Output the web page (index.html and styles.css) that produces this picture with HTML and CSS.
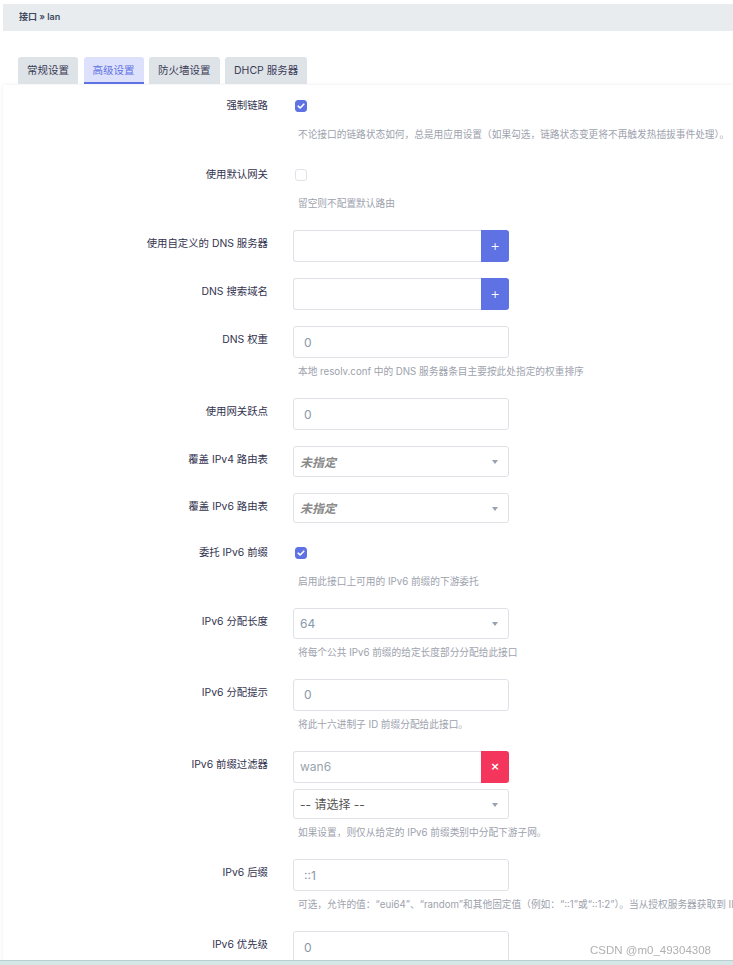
FILE: index.html
```html
<!DOCTYPE html>
<html lang="zh-CN">
<head>
<meta charset="utf-8">
<title>接口 » lan</title>
<link rel="stylesheet" href="styles.css">
</head>
<body>
<div class="page">
  <div class="crumb">接口 » lan</div>
  <ul class="tabs">
    <li class="tab">常规设置</li>
    <li class="tab active">高级设置</li>
    <li class="tab">防火墙设置</li>
    <li class="tab">DHCP 服务器</li>
  </ul>
  <div class="panel">
    <div class="row">
      <div class="label">强制链路</div>
      <div class="check-cell"><span class="cb checked"><svg viewBox="0 0 12 12" width="12" height="12"><path d="M3.2 6.2 L5.1 8 L8.8 4.2" fill="none" stroke="#fff" stroke-width="1.6" stroke-linecap="round" stroke-linejoin="round"/></svg></span></div>
      <div class="desc">不论接口的链路状态如何，总是用应用设置（如果勾选，链路状态变更将不再触发热插拔事件处理）。</div>
    </div>
    <div class="row">
      <div class="label">使用默认网关</div>
      <div class="check-cell"><span class="cb"></span></div>
      <div class="desc">留空则不配置默认路由</div>
    </div>
    <div class="row">
      <div class="label">使用自定义的 DNS 服务器</div>
      <div class="group"><div class="field grow"></div><span class="btn add">+</span></div>
    </div>
    <div class="row">
      <div class="label">DNS 搜索域名</div>
      <div class="group"><div class="field grow"></div><span class="btn add">+</span></div>
    </div>
    <div class="row">
      <div class="label">DNS 权重</div>
      <div class="field">0</div>
      <div class="desc">本地 resolv.conf 中的 DNS 服务器条目主要按此处指定的权重排序</div>
    </div>
    <div class="row">
      <div class="label">使用网关跃点</div>
      <div class="field">0</div>
    </div>
    <div class="row">
      <div class="label">覆盖 IPv4 路由表</div>
      <div class="field select unset">未指定</div>
    </div>
    <div class="row">
      <div class="label">覆盖 IPv6 路由表</div>
      <div class="field select unset">未指定</div>
    </div>
    <div class="row">
      <div class="label">委托 IPv6 前缀</div>
      <div class="check-cell"><span class="cb checked"><svg viewBox="0 0 12 12" width="12" height="12"><path d="M3.2 6.2 L5.1 8 L8.8 4.2" fill="none" stroke="#fff" stroke-width="1.6" stroke-linecap="round" stroke-linejoin="round"/></svg></span></div>
      <div class="desc">启用此接口上可用的 IPv6 前缀的下游委托</div>
    </div>
    <div class="row">
      <div class="label">IPv6 分配长度</div>
      <div class="field select">64</div>
      <div class="desc">将每个公共 IPv6 前缀的给定长度部分分配给此接口</div>
    </div>
    <div class="row">
      <div class="label">IPv6 分配提示</div>
      <div class="field">0</div>
      <div class="desc">将此十六进制子 ID 前缀分配给此接口。</div>
    </div>
    <div class="row">
      <div class="label">IPv6 前缀过滤器</div>
      <div class="stack">
        <div class="group"><div class="field grow light">wan6</div><span class="btn del">×</span></div>
        <div class="field select choose">-- 请选择 --</div>
      </div>
      <div class="desc">如果设置，则仅从给定的 IPv6 前缀类别中分配下游子网。</div>
    </div>
    <div class="row">
      <div class="label">IPv6 后缀</div>
      <div class="field">::1</div>
      <div class="desc">可选，允许的值：“eui64”、“random”和其他固定值（例如：“::1”或“::1:2”）。当从授权服务器获取到 IPv6 前缀（如 a:b:c:d::）时，使用后缀（如 '::1'）合成 IPv6 地址（'a:b:c:d::1'）。</div>
    </div>
    <div class="row">
      <div class="label">IPv6 优先级</div>
      <div class="field">0</div>
    </div>
  </div>
</div>
<div class="watermark">CSDN @m0_49304308</div>
<div class="bottom-band"></div>
</body>
</html>
```
FILE: styles.css
```css
html, body {
  margin: 0;
  padding: 0;
  background: #fff;
  overflow: hidden;
  height: 965px;
}
body {
  font-family: Inter, "Noto Sans CJK SC", "Noto Sans", sans-serif;
  color: #32325d;
}
.page {
  padding: 4px 0 0 3px;
}
.crumb {
  height: 27px;
  line-height: 26px;
  background: #e9ecef;
  padding-left: 16px;
  font-size: 9px;
  font-weight: 600;
  color: #3c4a60;
}
.tabs {
  list-style: none;
  margin: 26px 0 0 0;
  padding: 0 0 0 15px;
  display: flex;
  gap: 5.5px;
}
.tab {
  height: 27px;
  line-height: 28px;
  padding: 0 9px;
  background: #dee3e8;
  border-radius: 3px 3px 0 0;
  font-size: 10.5px;
  color: #3a3a55;
  box-sizing: border-box;
}
.tab.active {
  background: #dde1fb;
  color: #5e72e4;
  border-bottom: 2px solid #5e72e4;
}
.panel {
  margin-top: 1px;
  background: #fff;
  box-shadow: 0 0 4px rgba(0, 0, 0, 0.08);
  padding-top: 7px;
  min-height: 900px;
}
.row {
  display: grid;
  grid-template-columns: 265px 216px;
  column-gap: 25px;
  margin-bottom: 16px;
  align-items: start;
}
.label {
  text-align: right;
  font-size: 10.4px;
  line-height: 16px;
  padding-top: 6px;
  color: #33334f;
  white-space: nowrap;
}
.check-cell {
  height: 29px;
  padding-top: 8px;
  box-sizing: border-box;
}
.cb {
  display: block;
  width: 12px;
  height: 12px;
  margin-left: 2px;
  box-sizing: border-box;
  border: 1px solid #dfe3e8;
  border-radius: 3px;
  background: #fff;
}
.cb.checked {
  background: #5e72e4;
  border-color: #5e72e4;
}
.cb.checked svg {
  display: block;
  margin: -1px 0 0 -1px;
}
.desc {
  grid-column: 2;
  white-space: nowrap;
  font-size: 9.7px;
  line-height: 16px;
  margin: 6px 0 2px 5px;
  color: #9da2ad;
}
.field {
  height: 32px;
  box-sizing: border-box;
  border: 1px solid #dee2e6;
  border-radius: 3px;
  display: flex;
  align-items: center;
  padding: 0 10px;
  font-size: 12px;
  color: #8898aa;
  background: #fff;
}
.field.select {
  height: 30.5px;
  position: relative;
  padding-left: 6px;
}
.field.select::after {
  content: "";
  position: absolute;
  right: 10px;
  top: 13px;
  border-left: 3px solid transparent;
  border-right: 3px solid transparent;
  border-top: 4px solid #97a1b0;
}
.field.unset {
  font-style: italic;
  font-weight: 600;
  color: #8a8a8a;
}
.field.choose {
  color: #555;
}
.field.light {
  color: #9aa3ad;
  padding-left: 6px;
}
.group {
  display: flex;
}
.grow {
  flex: 1;
  border-radius: 3px 0 0 3px;
  border-right: none;
}
.btn {
  width: 28px;
  height: 32px;
  border-radius: 0 3px 3px 0;
  color: #fff;
  display: flex;
  align-items: center;
  justify-content: center;
  font-size: 11px;
  font-family: "DejaVu Sans", sans-serif;
}
.btn.add {
  background: #5e72e4;
}
.btn.del {
  background: #f5365c;
  font-size: 11px;
  font-weight: 700;
}
.stack {
  display: flex;
  flex-direction: column;
  gap: 6px;
}
.watermark {
  position: fixed;
  left: 590px;
  top: 944px;
  font-family: "Liberation Sans", sans-serif;
  font-size: 11.5px;
  color: #b0b0b0;
}
.bottom-band {
  position: fixed;
  left: 0;
  right: 0;
  bottom: 0;
  height: 4px;
  background: #d4e6e6;
  border-top: 1px solid #b9cfd0;
}
```
